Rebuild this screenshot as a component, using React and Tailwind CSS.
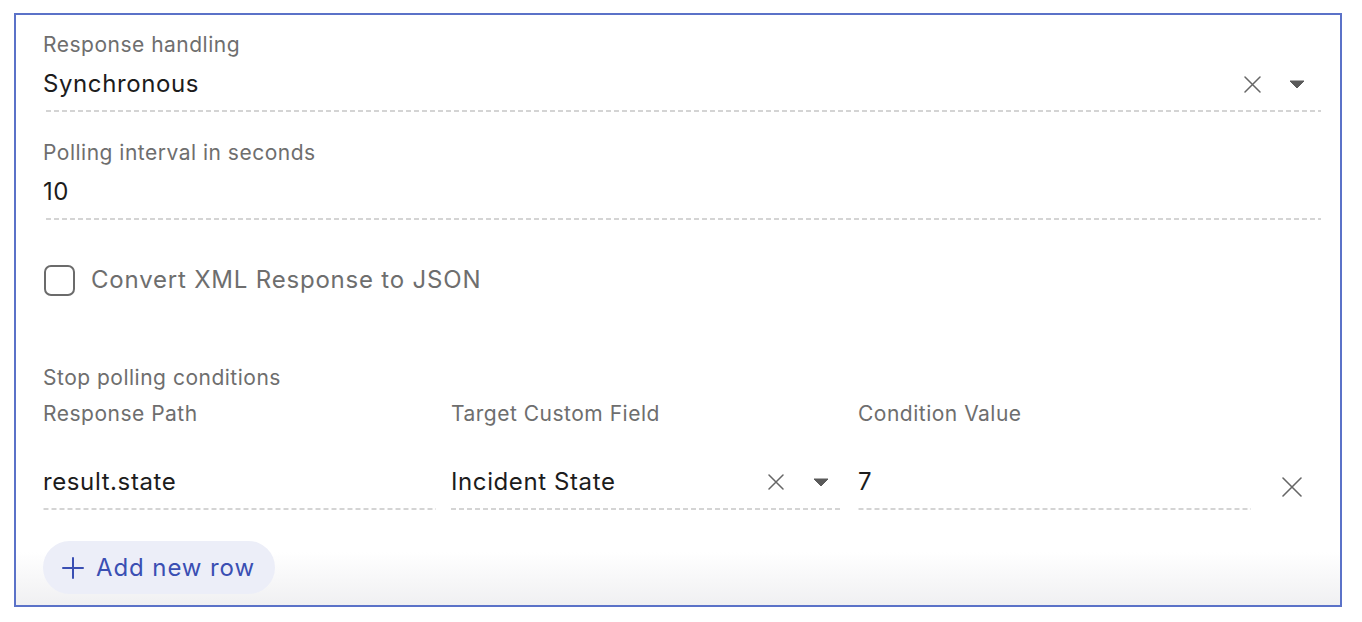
const font = { fontFamily: 'Inter, "Noto Sans", sans-serif' };

const dashed =
  'bg-[linear-gradient(to_right,#d4d4d4_62%,transparent_0)] bg-[length:8px_2px] bg-repeat-x bg-bottom';

function Cross({ size = 16, stroke = 1.5 }) {
  return (
    <svg width={size} height={size} viewBox={`0 0 ${size} ${size}`} className="shrink-0">
      <path d={`M1 1L${size - 1} ${size - 1}M${size - 1} 1L1 ${size - 1}`} stroke="#666" strokeWidth={stroke} strokeLinecap="round" fill="none" />
    </svg>
  );
}

function Caret() {
  return (
    <svg width="16" height="9" viewBox="0 0 16 9" className="shrink-0">
      <path d="M1 1h14L8 8z" fill="#5a5a5a" stroke="#5a5a5a" strokeWidth="1" strokeLinejoin="round" />
    </svg>
  );
}

function Label({ children, className = '' }) {
  return (
    <div className={`h-[28px] text-[21px] leading-[28px] tracking-[0.5px] whitespace-nowrap text-[#6e6e6e] ${className}`}>
      {children}
    </div>
  );
}

function Field({ label, value, select }) {
  return (
    <div className={`pb-[8px] ${dashed}`}>
      <Label className="mt-[1px]">{label}</Label>
      <div className="mt-[5px] flex h-[40px] items-center">
        <span className="flex-1 text-[24px] tracking-[0.6px] text-[#1c1c1c]">{value}</span>
        {select && (
          <div className="flex items-center gap-[28px] pr-[16px]">
            <Cross size={17} />
            <Caret />
          </div>
        )}
      </div>
    </div>
  );
}

function Cell({ value, select }) {
  return (
    <div className={`flex h-[48px] items-center pb-[8px] ${dashed}`}>
      <span className="flex-1 text-[24px] tracking-[0.6px] text-[#1c1c1c]">{value}</span>
      {select && (
        <div className="flex items-center gap-[29px] pr-[14px]">
          <Cross size={16} />
          <Caret />
        </div>
      )}
    </div>
  );
}

export default function App() {
  return (
    <div className="min-h-screen bg-white pl-[14px] pt-[13px]" style={font}>
      <div className="h-[594px] w-[1328px] border-2 border-[#5b72c8] bg-[linear-gradient(to_bottom,#ffffff_91%,#f0f0f2)] pl-[27px] pr-[19px] pt-[15px]">
        <Field label="Response handling" value="Synchronous" select />
        <div className="mt-[27px]">
          <Field label="Polling interval in seconds" value="10" />
        </div>

        <label className="mt-[42px] flex items-center gap-[16px]">
          <span className="ml-[1px] h-[31px] w-[31px] rounded-[7px] border-2 border-[#6b6b6b]" />
          <span className="text-[24px] tracking-[0.8px] text-[#6e6e6e]">Convert XML Response to JSON</span>
        </label>

        <Label className="mt-[66px]">Stop polling conditions</Label>
        <div className="mt-[8px] grid grid-cols-[393px_392px_393px_1fr] gap-x-[15px]">
          <Label>Response Path</Label>
          <Label>Target Custom Field</Label>
          <Label>Condition Value</Label>
          <div />
          <div className="col-span-4 h-[34px]" />
          <Cell value="result.state" />
          <Cell value="Incident State" select />
          <Cell value="7" />
          <div className="flex items-center pl-[16px] pt-[2px]">
            <Cross size={20} stroke={1.6} />
          </div>
        </div>

        <button className="mt-[31px] flex h-[53px] items-center gap-[12px] rounded-full bg-[#eceef8] pl-[19px] pr-[20px] text-[24px] tracking-[0.9px] text-[#3a4fb3]">
          <svg width="22" height="22" viewBox="0 0 22 22" className="shrink-0">
            <path d="M11 1v20M1 11h20" stroke="#3a4fb3" strokeWidth="2" strokeLinecap="round" fill="none" />
          </svg>
          Add new row
        </button>
      </div>
    </div>
  );
}
